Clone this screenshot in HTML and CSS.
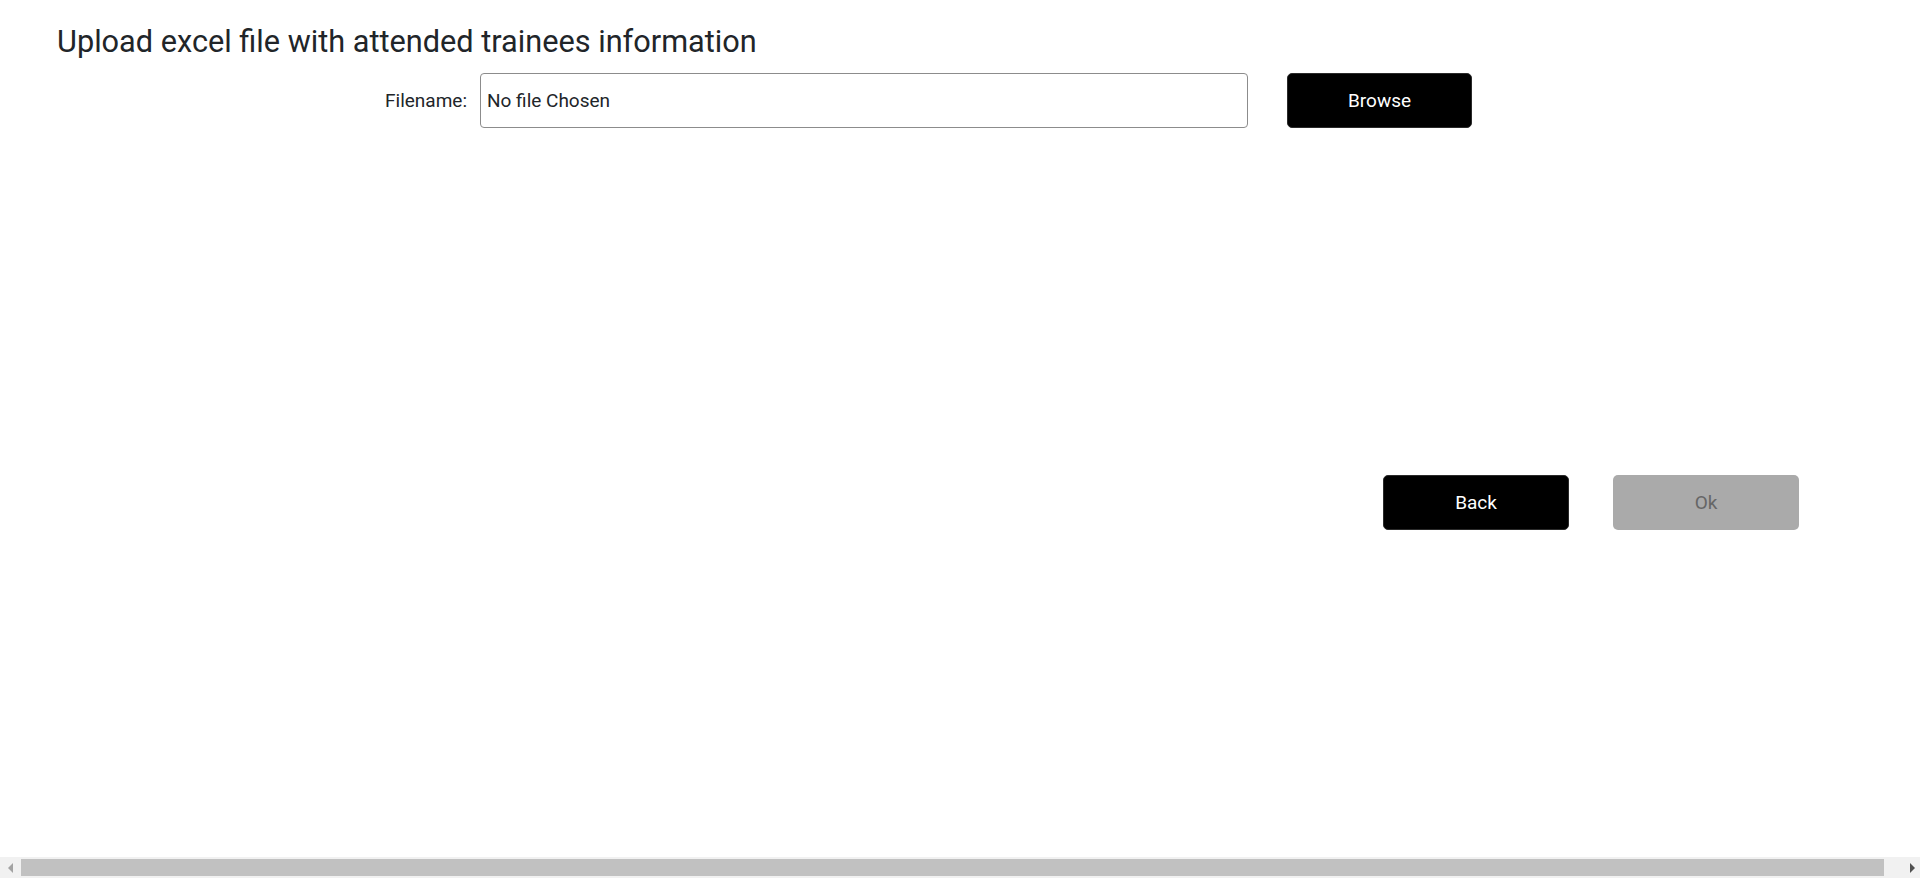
FILE: index.html
```html
<!DOCTYPE html>
<html lang="en">
<head>
<meta charset="utf-8">
<title>Upload excel file</title>
<link rel="stylesheet" href="styles.css">
</head>
<body>
<div class="app">
  <main class="content">
    <h1 class="title">Upload excel file with attended trainees information</h1>
    <div class="file-row">
      <label class="file-label" for="fname">Filename:</label>
      <input class="file-input" id="fname" type="text" value="No file Chosen" readonly>
      <button class="btn btn-dark browse">Browse</button>
    </div>
    <div class="actions">
      <button class="btn btn-dark">Back</button>
      <button class="btn btn-disabled" disabled>Ok</button>
    </div>
  </main>
  <div class="hscroll">
    <div class="hscroll-btn"><span class="arrow arrow-left"></span></div>
    <div class="hscroll-track"><div class="hscroll-thumb"></div></div>
    <div class="hscroll-btn"><span class="arrow arrow-right"></span></div>
  </div>
</div>
</body>
</html>
```
FILE: styles.css
```css
* { box-sizing: border-box; }
html, body {
  margin: 0;
  padding: 0;
  height: 100%;
  overflow: hidden;
  background: #ffffff;
}
body {
  font-family: Roboto, "Liberation Sans", Arial, sans-serif;
  color: #212529;
}
.app {
  height: 100vh;
  display: flex;
  flex-direction: column;
}
.content {
  flex: 1;
  padding: 25px 0 0 57px;
}
.title {
  margin: 0;
  font-size: 30.7px;
  font-weight: 400;
  line-height: 33px;
  color: #212529;
}
.file-row {
  margin-top: 15px;
  display: flex;
  align-items: center;
}
.file-label {
  width: 423px;
  flex: none;
  font-size: 19px;
  text-align: right;
  padding-right: 13px;
  color: #212529;
}
.file-input {
  flex: none;
  height: 55px;
  width: 768px;
  border: 1px solid #8c8c8c;
  border-radius: 4px;
  padding: 0 6px;
  font-family: Roboto, "Liberation Sans", Arial, sans-serif;
  font-size: 19px;
  color: #212529;
  background: #fff;
  outline: none;
}
.btn {
  width: 186px;
  height: 55px;
  border-radius: 5px;
  font-family: Roboto, "Liberation Sans", Arial, sans-serif;
  font-size: 19px;
  border: none;
  padding: 0;
  flex: none;
}
.browse {
  width: 185px;
  margin-left: 39px;
}
.btn-dark {
  background: #000;
  color: #fff;
  border: 1px solid #2a2a2a;
}
.btn-disabled {
  background: #aaaaaa;
  color: #666666;
}
.actions {
  margin-top: 347px;
  display: flex;
  gap: 44px;
  padding-left: 1326px;
}
.hscroll {
  height: 21px;
  flex: none;
  background: #f1f1f1;
  display: flex;
  align-items: center;
}
.hscroll-btn {
  width: 19px;
  height: 21px;
  display: flex;
  align-items: center;
  justify-content: center;
  flex: none;
}
.hscroll-track {
  flex: 1;
  height: 21px;
  display: flex;
  align-items: center;
  padding: 0 17px 0 2px;
}
.hscroll-thumb {
  height: 17px;
  width: 100%;
  background: #c1c1c1;
}
.arrow {
  width: 0;
  height: 0;
  border-top: 5px solid transparent;
  border-bottom: 5px solid transparent;
}
.arrow-left { border-right: 5px solid #a3a3a3; margin-left: 2px; }
.arrow-right { border-left: 5px solid #505050; margin-left: 4px; }
```
